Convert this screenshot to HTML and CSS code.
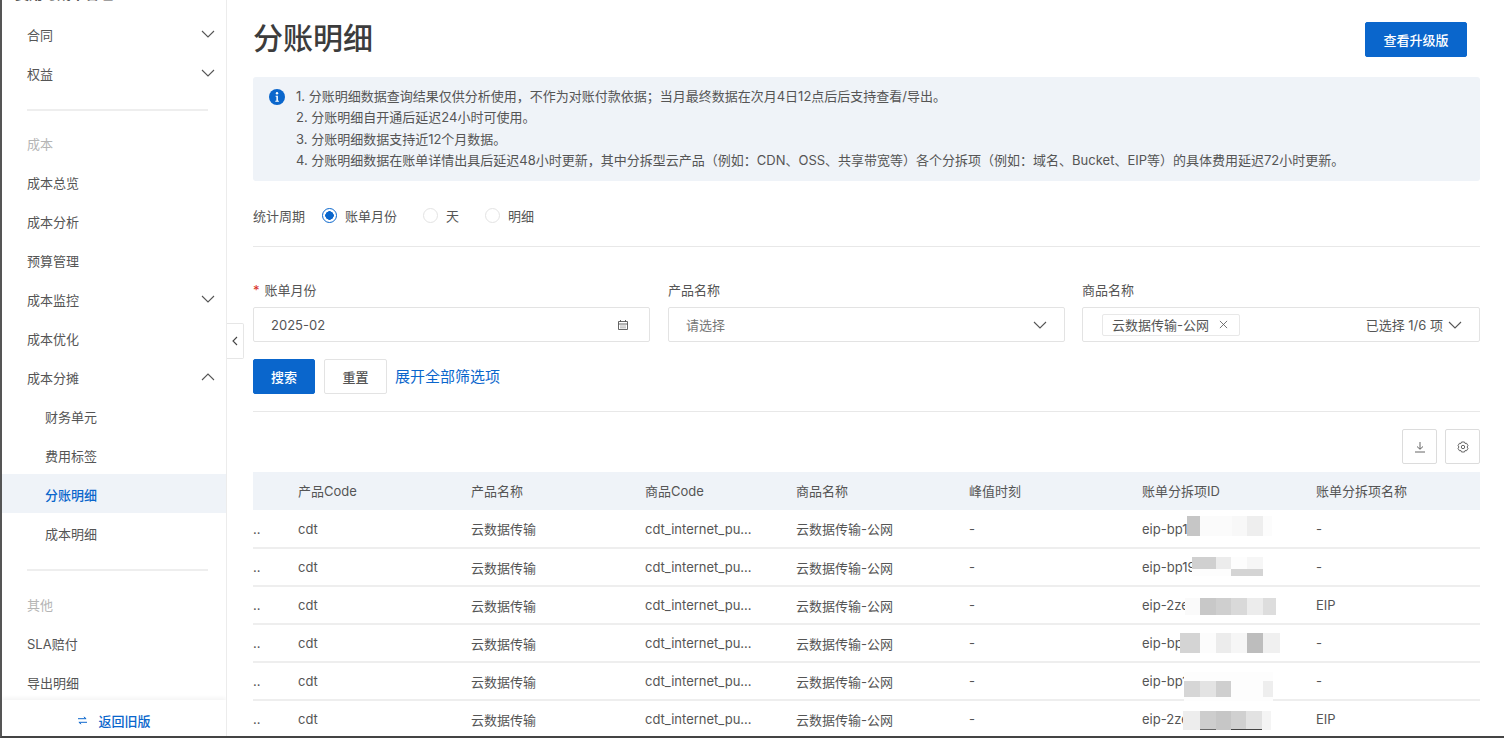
FILE: index.html
```html
<!DOCTYPE html>
<html>
<head>
    <meta charset="utf-8">
    <title>分账明细</title>
    <link rel="stylesheet" href="styles.css">
</head>
<body>
    <div class="page">
        <aside class="sidebar">
            <nav class="nav">
                <div class="nav-item nav-top">费用与成本管理<svg class="chev" viewBox="0 0 14 8"><path d="M1 1l6 6 6-6"/></svg></div>
                <div class="nav-item">合同<svg class="chev" viewBox="0 0 14 8"><path d="M1 1l6 6 6-6"/></svg></div>
                <div class="nav-item">权益<svg class="chev" viewBox="0 0 14 8"><path d="M1 1l6 6 6-6"/></svg></div>
                <div class="nav-divider"></div>
                <div class="nav-group">成本</div>
                <div class="nav-item">成本总览</div>
                <div class="nav-item">成本分析</div>
                <div class="nav-item">预算管理</div>
                <div class="nav-item">成本监控<svg class="chev" viewBox="0 0 14 8"><path d="M1 1l6 6 6-6"/></svg></div>
                <div class="nav-item">成本优化</div>
                <div class="nav-item">成本分摊<svg class="chev" viewBox="0 0 14 8"><path d="M1 7l6-6 6 6"/></svg></div>
                <div class="nav-item sub">财务单元</div>
                <div class="nav-item sub">费用标签</div>
                <div class="nav-item sub active">分账明细</div>
                <div class="nav-item sub">成本明细</div>
                <div class="nav-divider lower"></div>
                <div class="nav-group">其他</div>
                <div class="nav-item">SLA赔付</div>
                <div class="nav-item">导出明细</div>
            </nav>
            <div class="back-old">
                <svg class="swap" viewBox="0 0 12 10"><path d="M1 3h9L7.500 1M11 7H2l2.500 2"/></svg>
                <span>返回旧版</span>
            </div>
        </aside>

        <div class="collapse-handle">
            <svg viewBox="0 0 6 10"><path d="M5 1L1 5l4 4"/></svg>
        </div>

        <main class="main">
            <div class="page-head">
                <h1>分账明细</h1>
                <button class="btn btn-primary btn-upgrade">查看升级版</button>
            </div>

            <div class="notice">
                <svg class="notice-icon" viewBox="0 0 16 16">
                    <circle cx="8" cy="8" r="8" fill="#0a66cc"/>
                    <circle cx="8" cy="4.200" r="1.200" fill="#fff"/>
                    <path d="M6.600 6.700h2.300v5h1v1.100H6.300v-1.100h1.100V7.800h-.8z" fill="#fff"/>
                </svg>
                <div class="notice-text">
                    <div>1. 分账明细数据查询结果仅供分析使用，不作为对账付款依据；当月最终数据在次月4日12点后后支持查看/导出。</div>
                    <div>2. 分账明细自开通后延迟24小时可使用。</div>
                    <div>3. 分账明细数据支持近12个月数据。</div>
                    <div>4. 分账明细数据在账单详情出具后延迟48小时更新，其中分拆型云产品（例如：CDN、OSS、共享带宽等）各个分拆项（例如：域名、Bucket、EIP等）的具体费用延迟72小时更新。</div>
                </div>
            </div>

            <div class="period">
                <span class="period-label">统计周期</span>
                <label class="radio"><i class="dot checked"></i>账单月份</label>
                <label class="radio"><i class="dot"></i>天</label>
                <label class="radio"><i class="dot"></i>明细</label>
            </div>

            <div class="filters">
                <div class="field">
                    <div class="field-label"><em>*</em>账单月份</div>
                    <div class="input">
                        <span>2025-02</span>
                        <svg class="cal" viewBox="0 0 12 12"><path d="M1.500 2.500h9v8h-9zM1.500 5h9M3.500 1v2M8.500 1v2M3.500 7h1M5.500 7h1M7.500 7h1M3.500 8.800h1M5.500 8.800h1M7.500 8.800h1"/></svg>
                    </div>
                </div>
                <div class="field">
                    <div class="field-label">产品名称</div>
                    <div class="input">
                        <span class="placeholder">请选择</span>
                        <svg class="chev" viewBox="0 0 14 8"><path d="M1 1l6 6 6-6"/></svg>
                    </div>
                </div>
                <div class="field field-last">
                    <div class="field-label">商品名称</div>
                    <div class="input input-tags">
                        <span class="tag">云数据传输-公网<svg viewBox="0 0 10 10"><path d="M1 1l8 8M9 1l-8 8"/></svg></span>
                        <span class="picked">已选择 1/6 项<svg class="chev" viewBox="0 0 14 8"><path d="M1 1l6 6 6-6"/></svg></span>
                    </div>
                </div>
            </div>

            <div class="actions">
                <button class="btn btn-primary btn-search">搜索</button>
                <button class="btn">重置</button>
                <a class="expand">展开全部筛选项</a>
            </div>

            <div class="toolbar">
                <button class="icon-btn"><svg viewBox="0 0 12 12"><path d="M6 1v7M3 5.500L6 8.300l3-2.800M1 11h10"/></svg></button>
                <button class="icon-btn"><svg viewBox="0 0 12 12"><path d="M4.500 1h3l.6 1.500 1.500-.2 1.400 2.400-1 1.300 1 1.300-1.400 2.400-1.500-.2L7.500 11h-3l-.6-1.500-1.500.2L1 7.300l1-1.300-1-1.300 1.400-2.400 1.500.2z"/><circle cx="6" cy="6" r="1.700"/></svg></button>
            </div>

            <table class="grid">
                <colgroup>
                    <col class="c0"><col class="c1"><col class="c2"><col class="c3"><col class="c4"><col class="c5"><col class="c6"><col class="c7">
                </colgroup>
                <thead>
                    <tr><th></th><th>产品Code</th><th>产品名称</th><th>商品Code</th><th>商品名称</th><th>峰值时刻</th><th>账单分拆项ID</th><th>账单分拆项名称</th></tr>
                </thead>
                <tbody>
                    <tr><td>..</td><td>cdt</td><td>云数据传输</td><td>cdt_internet_pu...</td><td>云数据传输-公网</td><td>-</td><td class="masked">eip-bp1<i class="mosaic m1"></i></td><td>-</td></tr>
                    <tr><td>..</td><td>cdt</td><td>云数据传输</td><td>cdt_internet_pu...</td><td>云数据传输-公网</td><td>-</td><td class="masked">eip-bp19<i class="mosaic m2"></i></td><td>-</td></tr>
                    <tr><td>..</td><td>cdt</td><td>云数据传输</td><td>cdt_internet_pu...</td><td>云数据传输-公网</td><td>-</td><td class="masked">eip-2ze<i class="mosaic m3"></i></td><td>EIP</td></tr>
                    <tr><td>..</td><td>cdt</td><td>云数据传输</td><td>cdt_internet_pu...</td><td>云数据传输-公网</td><td>-</td><td class="masked">eip-bp<i class="mosaic m4"></i></td><td>-</td></tr>
                    <tr><td>..</td><td>cdt</td><td>云数据传输</td><td>cdt_internet_pu...</td><td>云数据传输-公网</td><td>-</td><td class="masked">eip-bp1<i class="mosaic m5"></i></td><td>-</td></tr>
                    <tr><td>..</td><td>cdt</td><td>云数据传输</td><td>cdt_internet_pu...</td><td>云数据传输-公网</td><td>-</td><td class="masked">eip-2ze<i class="mosaic m6"></i></td><td>EIP</td></tr>
                </tbody>
            </table>
        </main>
    </div>
</body>
</html>
```

FILE: styles.css
```css
* {
    box-sizing: border-box;
}
html, body {
    margin: 0;
    height: 100%;
    overflow: hidden;
}
body {
    font-family: Inter, "Noto Sans CJK SC", sans-serif;
    font-size: 13px;
    color: #555;
    background-color: #fff;
    border-left: 2px solid #555;
    border-bottom: 2px solid #444;
}
.page {
    display: flex;
    height: 100%;
    position: relative;
}
svg {
    fill: none;
    stroke: currentColor;
    stroke-width: 1.1;
}

/* sidebar */
.sidebar {
    width: 225px;
    flex: none;
    display: flex;
    flex-direction: column;
    border-right: 1px solid #ececec;
    overflow: hidden;
}
.nav {
    flex: 1;
    margin-top: -25px;
    overflow: hidden;
}
.nav-item {
    height: 39px;
    padding: 1px 11px 0 25px;
    display: flex;
    align-items: center;
    justify-content: space-between;
    color: #555;
}
.nav-top {
    padding-left: 13px;
    align-items: flex-start;
    padding-top: 8px;
    font-size: 14px;
    font-weight: bold;
}
.nav-item.sub {
    padding-left: 43px;
}
.nav-item.active {
    background-color: #eff3f8;
    color: #0a66cc;
    font-weight: 500;
}
.nav-group {
    height: 39px;
    padding: 1px 0 0 25px;
    display: flex;
    align-items: center;
    color: #b5b5b5;
}
.nav-divider {
    height: 2px;
    margin: 17px 18px 12px 25px;
    background-color: #eeeeee;
}
.nav-divider.lower {
    margin-bottom: 13px;
}
.chev {
    width: 14px;
    height: 8px;
    color: #555;
}
.back-old {
    height: 36px;
    flex: none;
    display: flex;
    align-items: center;
    justify-content: center;
    gap: 10px;
    padding-top: 4px;
    color: #0a66cc;
    font-weight: 500;
    box-shadow: 0 -2px 4px rgba(0, 0, 0, 0.05);
}
.swap {
    width: 11px;
    height: 9px;
}

/* the tab that collapses the sidebar */
.collapse-handle {
    position: absolute;
    left: 225px;
    top: 323px;
    width: 17px;
    height: 36px;
    display: flex;
    align-items: center;
    justify-content: center;
    background-color: #fff;
    border: 1px solid #e6e6e6;
    border-left: none;
    border-radius: 0 2px 2px 0;
    color: #444;
}
.collapse-handle svg {
    width: 6px;
    height: 10px;
}

/* main */
.main {
    flex: 1;
    min-width: 0;
    padding: 0 24px 0 26px;
    overflow: hidden;
}
.page-head {
    height: 77px;
    display: flex;
    justify-content: space-between;
    align-items: flex-start;
}
h1 {
    margin: 17px 0 0;
    font-size: 30px;
    line-height: 42px;
    font-weight: 500;
    color: #3c3c3c;
}
.btn {
    height: 35px;
    padding: 0 17px;
    font: inherit;
    font-weight: 500;
    color: #555;
    background-color: #fff;
    border: 1px solid #e3e3e3;
    border-radius: 2px;
}
.btn-primary {
    color: #fff;
    background-color: #0a66cc;
    border-color: #0a66cc;
}
.btn-upgrade {
    margin: 22px 13px 0 0;
    width: 102px;
    padding: 0;
}
.notice {
    height: 104px;
    padding: 9px 16px;
    display: flex;
    gap: 11px;
    background-color: #eff3f8;
    border-radius: 3px;
}
.notice-icon {
    width: 16px;
    height: 16px;
    margin-top: 3px;
    flex: none;
    stroke: none;
}
.notice-text {
    line-height: 21.33px;
}
.period {
    height: 66px;
    padding-top: 4px;
    display: flex;
    align-items: center;
    border-bottom: 1px solid #e8e8e8;
}
.period-label {
    margin-right: 17px;
}
.radio {
    display: flex;
    align-items: center;
    gap: 8px;
    margin-right: 26px;
}
.dot {
    width: 15px;
    height: 15px;
    border: 1px solid #e3e3e3;
    border-radius: 50%;
}
.dot.checked {
    border-color: #0a66cc;
    background: radial-gradient(circle, #0a66cc 0 4px, #fff 4.500px);
}

/* filters */
.filters {
    display: grid;
    grid-template-columns: 397px 397px 397px;
    column-gap: 18px;
    margin-top: 34px;
}
.field-last {
    margin-left: -1px;
}
.field-label {
    height: 26px;
    line-height: 18px;
}
.field-label em {
    color: #d93026;
    font-style: normal;
    margin-right: 5px;
}
.input {
    height: 35px;
    padding: 0 17px;
    display: flex;
    align-items: center;
    justify-content: space-between;
    border: 1px solid #e3e3e3;
    border-radius: 2px;
}
.placeholder {
    color: #777;
}
.cal {
    width: 12px;
    height: 12px;
    margin-right: 3px;
    stroke-width: 0.9;
}
.input-tags {
    padding: 0 17px 0 19px;
}
.tag {
    height: 22px;
    padding: 0 11px 0 9px;
    display: flex;
    align-items: center;
    gap: 10px;
    border: 1px solid #e8e8e8;
    border-radius: 2px;
}
.tag svg {
    width: 9px;
    height: 9px;
    stroke-width: 0.9;
}
.picked {
    display: flex;
    align-items: center;
    gap: 5px;
}
.actions {
    height: 52px;
    padding-top: 17px;
    display: flex;
    align-items: flex-start;
    gap: 9px;
    border-bottom: 1px solid #e8e8e8;
    box-sizing: content-box;
}
.actions .btn {
    width: 63px;
    padding: 0;
}
.actions .btn-search {
    width: 62px;
}
.expand {
    margin-left: -1px;
    line-height: 35px;
    font-size: 15px;
    color: #0a66cc;
}
.toolbar {
    height: 60px;
    padding-top: 17px;
    display: flex;
    justify-content: flex-end;
    gap: 8px;
}
.icon-btn {
    width: 35px;
    height: 35px;
    padding: 0;
    display: flex;
    align-items: center;
    justify-content: center;
    color: #555;
    background-color: #fff;
    border: 1px solid #dcdcdc;
    border-radius: 2px;
}
.icon-btn svg {
    width: 12px;
    height: 12px;
    stroke-width: 0.9;
}

/* table */
.grid {
    width: 100%;
    table-layout: fixed;
    border-collapse: collapse;
}
.c0 { width: 45px; }
.c1 { width: 173px; }
.c2 { width: 174px; }
.c3 { width: 151px; }
.c4 { width: 173px; }
.c5 { width: 173px; }
.c6 { width: 174px; }
.c7 { width: 164px; }
.grid th {
    height: 38px;
    padding: 0 0 2px;
    text-align: left;
    font-weight: normal;
    background-color: #eff3f8;
    color: #555;
}
.grid td {
    height: 38px;
    padding: 0;
    border-bottom: 2px solid #eeeeee;
    white-space: nowrap;
}
.masked {
    position: relative;
}
.mosaic {
    position: absolute;
    display: block;
}
.m1 {
    left: 45px; top: 6px; width: 85px; height: 20px;
    background: linear-gradient(90deg, #c6c6c6 0 13px, #fbfbfb 13px 45px, #f8f8f8 45px 60px, #eeeeee 60px 76px, #fcfcfc 76px);
}
.m2 {
    left: 50px; top: 8px; width: 73px; height: 19px;
    background:
        linear-gradient(90deg, #fdfdfd 0 39px, #d4d4d4 39px 71px, #fff 71px) 0 100% / 100% 7px no-repeat,
        linear-gradient(90deg, #d0d0d0 0 24px, #ececec 24px 39px, #fdfdfd 39px 55px, #f6f6f6 55px 71px, #fff 71px) 0 0 / 100% 12px no-repeat;
}
.m3 {
    left: 43px; top: 11px; width: 91px; height: 17px;
    background: linear-gradient(90deg, #fafafa 0 15px, #c8c8c8 15px 31px, #cfcfcf 31px 46px, #d9d9d9 46px 62px, #ececec 62px 78px, #dddddd 78px);
}
.m4 {
    left: 38px; top: 8px; width: 100px; height: 20px;
    background: linear-gradient(90deg, #d4d4d4 0 20px, #fcfcfc 20px 36px, #ececec 36px 51px, #f6f6f6 51px 67px, #bdbdbd 67px 83px, #f0f0f0 83px);
}
.m5 {
    left: 42px; top: 9px; width: 89px; height: 29px;
    background:
        linear-gradient(90deg, #d6d6d6 0 16px, #e3e3e3 16px 32px, #cfcfcf 32px 47px, #fdfdfd 47px 79px, #eeeeee 79px) 0 9px / 100% 16px no-repeat,
        #fdfdfd;
}
.m6 {
    left: 41px; top: 10px; width: 88px; height: 19px;
    background:
        linear-gradient(90deg, transparent 0 17px, #666 17px 33px, transparent 33px 48px, #444 48px 79px, transparent 79px) 0 100% / 100% 1px no-repeat,
        linear-gradient(90deg, #ededed 0 17px, #cdcdcd 17px 33px, #c6c6c6 33px 48px, #d0d0d0 48px 63px, #e2e2e2 63px 79px, #f4f4f4 79px);
}
```
